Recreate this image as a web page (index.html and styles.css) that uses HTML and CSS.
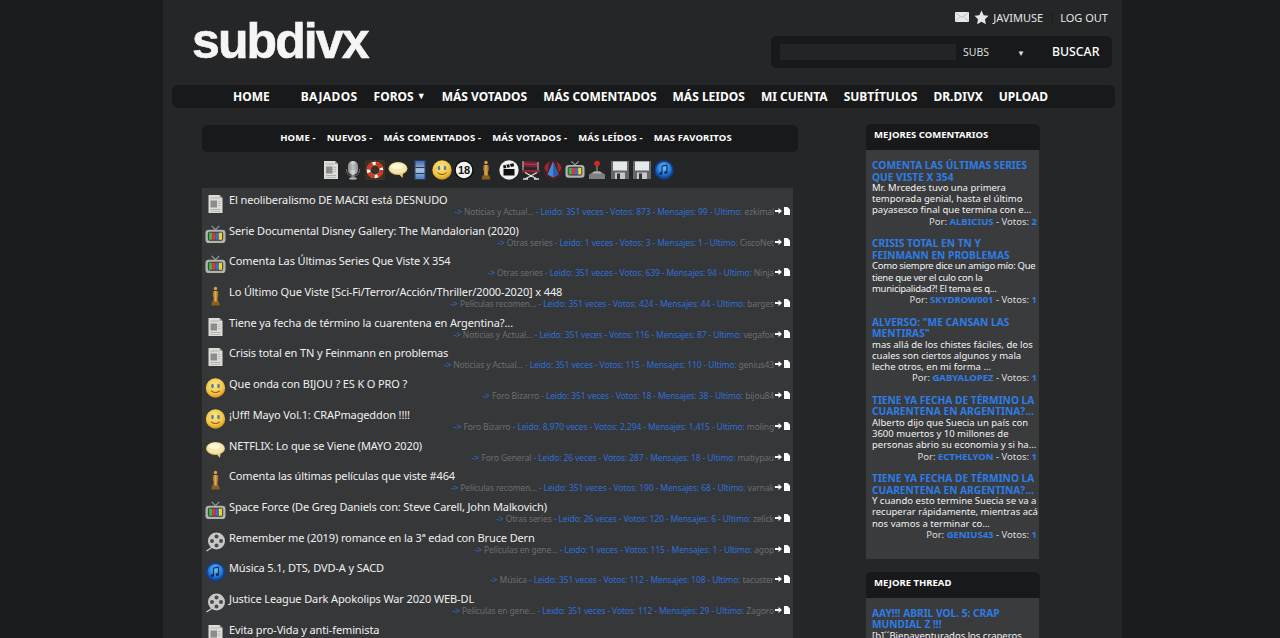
FILE: index.html
```html
<!DOCTYPE html>
<html lang="es">
<head>
  <meta charset="UTF-8">
  <title>subdivx</title>
  <link rel="stylesheet" href="styles.css">
</head>
<body>

  <!-- icon sprites -->
  <svg class="sprites" width="0" height="0">
    <defs>
      <radialGradient id="g-smile" cx=".45" cy=".35" r=".7">
        <stop offset="0" stop-color="#fbe88c"/><stop offset=".65" stop-color="#f3c43f"/><stop offset="1" stop-color="#c98512"/>
      </radialGradient>
      <radialGradient id="g-tunes" cx=".5" cy=".35" r=".7">
        <stop offset="0" stop-color="#6fc6f5"/><stop offset=".6" stop-color="#2379d8"/><stop offset="1" stop-color="#0f3a86"/>
      </radialGradient>
      <linearGradient id="g-mic" x1="0" x2="1" y1="0" y2="0">
        <stop offset="0" stop-color="#8d8d8d"/><stop offset=".5" stop-color="#dadada"/><stop offset="1" stop-color="#8d8d8d"/>
      </linearGradient>
      <linearGradient id="g-gold" x1="0" x2="1" y1="0" y2="0">
        <stop offset="0" stop-color="#8c5c1c"/><stop offset=".5" stop-color="#e0aa4c"/><stop offset="1" stop-color="#8c5c1c"/>
      </linearGradient>
      <linearGradient id="g-film" x1="0" x2="0" y1="0" y2="1">
        <stop offset="0" stop-color="#3f6db4"/><stop offset=".5" stop-color="#a9c4dc"/><stop offset="1" stop-color="#4c7fc6"/>
      </linearGradient>
    </defs>
    <symbol id="i-news" viewBox="0 0 20 20">
      <path d="M3 1h11l3 3v15H3z" fill="#dcdcd8"/><path d="M14 1l3 3h-3z" fill="#9c9c9c"/>
      <path d="M5 3.500h8v1H5zM5 15h10v1H5zM5 17h10v.8H5zM12.500 7h2.500v.8h-2.500zM12.500 9h2.500v.8h-2.500zM12.500 11h2.500v.8h-2.500z" fill="#b0b0ae"/>
      <rect x="5" y="6.500" width="6.500" height="7" fill="#8c8c8a"/>
    </symbol>
    <symbol id="i-mic" viewBox="0 0 20 20">
      <rect x="5" y="1" width="10" height="14" rx="5" fill="url(#g-mic)"/>
      <path d="M6 5h8M6 7h8M6 9h8" stroke="#8a8a8a" stroke-width=".6"/>
      <path d="M3.500 9c0 5.500 3 7 6.500 7s6.500-1.500 6.500-7" fill="none" stroke="#707070" stroke-width="1"/>
      <rect x="8.500" y="15" width="3" height="3" fill="#888"/><ellipse cx="10" cy="18.500" rx="4" ry="1.200" fill="#aaa"/>
    </symbol>
    <symbol id="i-buoy" viewBox="0 0 20 20">
      <rect x="0" y="0" width="20" height="20" rx="2" fill="#3b3226"/>
      <circle cx="10" cy="10" r="6.500" fill="none" stroke="#f3f3f3" stroke-width="3.600"/>
      <circle cx="10" cy="10" r="6.500" fill="none" stroke="#d8331f" stroke-width="3.600" stroke-dasharray="7 3.200"/>
    </symbol>
    <symbol id="i-bubble" viewBox="0 0 20 20">
      <ellipse cx="10" cy="8.500" rx="9.500" ry="6.500" fill="#e4c970"/>
      <ellipse cx="10" cy="8" rx="8.500" ry="5.500" fill="#f6e7ae"/>
      <ellipse cx="9" cy="6.500" rx="6" ry="2.800" fill="#fdf6d8"/>
      <path d="M11 14l3.500 4 .5-5z" fill="#e8d083"/>
    </symbol>
    <symbol id="i-film" viewBox="0 0 20 20">
      <rect x="4" y="0" width="12" height="20" fill="#2a3a5c"/>
      <rect x="5.500" y="1" width="9" height="18" fill="url(#g-film)"/>
      <path d="M5.500 7h9v1h-9zM5.500 13h9v1h-9z" fill="#27365a"/>
    </symbol>
    <symbol id="i-smile" viewBox="0 0 20 20">
      <circle cx="10" cy="10" r="9.700" fill="url(#g-smile)"/>
      <ellipse cx="7" cy="8" rx="1.300" ry="2.200" fill="#5a7ea0"/><ellipse cx="13" cy="8" rx="1.300" ry="2.200" fill="#5a7ea0"/>
      <path d="M5.500 12.500c2 2.600 7 2.600 9 0" fill="none" stroke="#6b4a12" stroke-width="1"/>
    </symbol>
    <symbol id="i-oscar" viewBox="0 0 20 20">
      <circle cx="10" cy="2.500" r="1.700" fill="#d7a24a"/>
      <path d="M7.500 5h5l.5 4-1 3 .3 4H7.700l.3-4-1-3z" fill="url(#g-gold)"/>
      <path d="M6.500 15.500h7l.8 4h-8.600z" fill="#8a5f20"/>
    </symbol>
    <symbol id="i-clap" viewBox="0 0 20 20">
      <circle cx="10" cy="10" r="9.700" fill="#f2f2f2"/>
      <rect x="4.500" y="9" width="11" height="6.500" fill="#111"/>
      <path d="M4 5.500l10.500-2.200.7 3-10.500 2.200z" fill="#111"/>
      <path d="M7 5l1 3M10.500 4.200l1 3" stroke="#eee" stroke-width="1"/>
    </symbol>
    <symbol id="i-chair" viewBox="0 0 20 20">
      <path d="M2 1l15 1v5.500L2 7z" fill="#7c2232"/><path d="M3 4l13 .5" stroke="#a8505e" stroke-width=".8"/>
      <path d="M2 1v9M17 2v8" stroke="#ccc" stroke-width="1"/>
      <path d="M1 10h18v2.500H1z" fill="#8f2738"/>
      <path d="M4 12.500L16 19M16 12.500L4 19M2 19h5M13 19h5" fill="none" stroke="#dcdcdc" stroke-width="1.400"/>
    </symbol>
    <symbol id="i-cone" viewBox="0 0 20 20">
      <circle cx="10" cy="10" r="9.700" fill="#4a2024"/>
      <path d="M10 1.500L15.500 14.500 10 17.500 4.500 14.500z" fill="#4d86d8"/>
      <path d="M10 1.500L15.500 14.500 10 17.500z" fill="#2c5fb0"/>
      <path d="M1.500 8C2 5 4 3 6 2L4.500 13zM18.500 8C18 5 16 3 14 2l1.500 11z" fill="#9c2c2a"/>
    </symbol>
    <symbol id="i-tv" viewBox="0 0 22 20">
      <path d="M7 .5l4 4 4-4" fill="none" stroke="#9a9a9a" stroke-width="1.200"/>
      <rect x="0.500" y="4.500" width="21" height="14" rx="3.500" fill="#b4b4ae"/>
      <rect x="3" y="6.500" width="16" height="9.500" rx="2" fill="#333"/>
      <rect x="4" y="7.500" width="3.500" height="7.500" fill="#3bb54a"/><rect x="7.500" y="7.500" width="3.500" height="7.500" fill="#e5352b"/>
      <rect x="11" y="7.500" width="3.500" height="7.500" fill="#2e6fd8"/><rect x="14.500" y="7.500" width="3.500" height="7.500" fill="#f2d22e"/>
    </symbol>
    <symbol id="i-joy" viewBox="0 0 20 20">
      <path d="M10 5v8" stroke="#777" stroke-width="1.600"/><circle cx="10" cy="3.500" r="2.800" fill="#d22a22"/>
      <path d="M2 14.500l5-3h6l5 3v4.500H2z" fill="#7f7f7f"/><path d="M7 11.500h6l2 2H5z" fill="#b5b5b5"/>
    </symbol>
    <symbol id="i-floppy" viewBox="0 0 20 20">
      <path d="M1 1h18v18H1z" fill="#62676d"/>
      <rect x="3" y="1.500" width="14" height="9" fill="#e6e9ea"/>
      <rect x="5" y="12.500" width="10" height="6.500" fill="#c8c8c8"/><rect x="7" y="13.500" width="3" height="5.500" fill="#333"/>
    </symbol>
    <symbol id="i-tunes" viewBox="0 0 20 20">
      <circle cx="10" cy="10" r="9.700" fill="#123f8a"/><circle cx="10" cy="10" r="8" fill="url(#g-tunes)"/>
      <path d="M8 6.200v7M13 5.200v7M8 6.200l5-1" fill="none" stroke="#0c2c66" stroke-width="1.200"/>
      <circle cx="6.800" cy="13.500" r="1.600" fill="#0c2c66"/><circle cx="11.800" cy="12.500" r="1.600" fill="#0c2c66"/>
    </symbol>
    <symbol id="i-reel" viewBox="0 0 20 20">
      <circle cx="11" cy="9" r="8.500" fill="#c8c8c8"/>
      <circle cx="11" cy="4.500" r="2" fill="#4a4a4c"/><circle cx="11" cy="13.500" r="2" fill="#4a4a4c"/>
      <circle cx="6.500" cy="9" r="2" fill="#4a4a4c"/><circle cx="15.500" cy="9" r="2" fill="#4a4a4c"/>
      <path d="M1 19l6-4" stroke="#ccc" stroke-width="1.400"/>
    </symbol>
    <symbol id="i-goto" viewBox="0 0 15 8">
      <path d="M0 3h3.500V1L7 4 3.500 7V5H0z" fill="#fff"/>
      <path d="M9 0h3.500L15 2.500V8H9z" fill="#fff"/>
    </symbol>
    <symbol id="i-mail" viewBox="0 0 14 10">
      <rect width="14" height="10" fill="#e8e8e8"/><path d="M0 0l7 5.500L14 0M0 10l5-5.500M14 10L9 4.500" fill="none" stroke="#aaa" stroke-width=".7"/>
    </symbol>
    <symbol id="i-star" viewBox="0 0 16 16">
      <path d="M8 .5l2.300 5 5.200.6-3.800 3.700 1 5.400L8 12.600l-4.700 2.600 1-5.400L.5 6.100l5.200-.6z" fill="#e6e6e6"/>
    </symbol>
  </svg>

  <div class="page">

    <header class="top">
      <a class="logo">subdivx</a>
      <div class="top-right">
        <div class="user-line">
          <svg class="mail"><use href="#i-mail"/></svg>
          <svg class="star"><use href="#i-star"/></svg>
          <span>JAVIMUSE</span>
          <span class="sep"></span>
          <span>LOG OUT</span>
        </div>
        <form class="search">
          <span class="search-input"></span>
          <span class="search-type">SUBS</span>
          <span class="search-arrow">▼</span>
          <span class="search-btn">BUSCAR</span>
        </form>
      </div>
    </header>

    <nav class="main-nav">
      <a>HOME</a>
      <a class="wide">BAJADOS</a>
      <a>FOROS <small>▼</small></a>
      <a>MÁS VOTADOS</a>
      <a>MÁS COMENTADOS</a>
      <a>MÁS LEIDOS</a>
      <a>MI CUENTA</a>
      <a>SUBTÍTULOS</a>
      <a>DR.DIVX</a>
      <a>UPLOAD</a>
    </nav>

    <div class="columns">
      <main class="left">
        <div class="sub-nav">
          <a>HOME -</a>
          <a>NUEVOS -</a>
          <a>MÁS COMENTADOS -</a>
          <a>MÁS VOTADOS -</a>
          <a>MÁS LEÍDOS -</a>
          <a>MAS FAVORITOS</a>
        </div>

        <div class="cats">
          <svg><use href="#i-news"/></svg>
          <svg><use href="#i-mic"/></svg>
          <svg><use href="#i-buoy"/></svg>
          <svg><use href="#i-bubble"/></svg>
          <svg><use href="#i-film"/></svg>
          <svg><use href="#i-smile"/></svg>
          <svg viewBox="0 0 20 20">
            <circle cx="10" cy="10" r="9.700" fill="#111"/><circle cx="10" cy="10" r="8.200" fill="#f4f4f4"/>
            <text x="10" y="14" class="badge-text" text-anchor="middle">18</text>
          </svg>
          <svg><use href="#i-oscar"/></svg>
          <svg><use href="#i-clap"/></svg>
          <svg><use href="#i-chair"/></svg>
          <svg><use href="#i-cone"/></svg>
          <svg><use href="#i-tv"/></svg>
          <svg><use href="#i-joy"/></svg>
          <svg><use href="#i-floppy"/></svg>
          <svg><use href="#i-floppy"/></svg>
          <svg><use href="#i-tunes"/></svg>
        </div>

        <div class="threads">
          <div class="thread">
            <svg class="thread-icon"><use href="#i-news"/></svg>
            <div class="thread-body">
              <div class="thread-title">El neoliberalismo DE MACRI está DESNUDO</div>
              <div class="thread-meta"><em>-&gt;</em> <i>Noticias y Actual...</i> - Leido: 351 veces - Votos: 873 - Mensajes: 99 - Ultimo: <i>ezkimal</i><svg class="goto"><use href="#i-goto"/></svg></div>
            </div>
          </div>
          <div class="thread">
            <svg class="thread-icon"><use href="#i-tv"/></svg>
            <div class="thread-body">
              <div class="thread-title">Serie Documental Disney Gallery: The Mandalorian (2020)</div>
              <div class="thread-meta"><em>-&gt;</em> <i>Otras series</i> - Leido: 1 veces - Votos: 3 - Mensajes: 1 - Ultimo: <i>CiscoNet</i><svg class="goto"><use href="#i-goto"/></svg></div>
            </div>
          </div>
          <div class="thread">
            <svg class="thread-icon"><use href="#i-tv"/></svg>
            <div class="thread-body">
              <div class="thread-title">Comenta Las Últimas Series Que Viste X 354</div>
              <div class="thread-meta"><em>-&gt;</em> <i>Otras series</i> - Leido: 351 veces - Votos: 639 - Mensajes: 94 - Ultimo: <i>Ninja</i><svg class="goto"><use href="#i-goto"/></svg></div>
            </div>
          </div>
          <div class="thread">
            <svg class="thread-icon"><use href="#i-oscar"/></svg>
            <div class="thread-body">
              <div class="thread-title">Lo Último Que Viste [Sci-Fi/Terror/Acción/Thriller/2000-2020] x 448</div>
              <div class="thread-meta"><em>-&gt;</em> <i>Películas recomen...</i> - Leido: 351 veces - Votos: 424 - Mensajes: 44 - Ultimo: <i>barges</i><svg class="goto"><use href="#i-goto"/></svg></div>
            </div>
          </div>
          <div class="thread">
            <svg class="thread-icon"><use href="#i-news"/></svg>
            <div class="thread-body">
              <div class="thread-title">Tiene ya fecha de término la cuarentena en Argentina?...</div>
              <div class="thread-meta"><em>-&gt;</em> <i>Noticias y Actual...</i> - Leido: 351 veces - Votos: 116 - Mensajes: 87 - Ultimo: <i>vegafox</i><svg class="goto"><use href="#i-goto"/></svg></div>
            </div>
          </div>
          <div class="thread">
            <svg class="thread-icon"><use href="#i-news"/></svg>
            <div class="thread-body">
              <div class="thread-title">Crisis total en TN y Feinmann en problemas</div>
              <div class="thread-meta"><em>-&gt;</em> <i>Noticias y Actual...</i> - Leido: 351 veces - Votos: 115 - Mensajes: 110 - Ultimo: <i>genius43</i><svg class="goto"><use href="#i-goto"/></svg></div>
            </div>
          </div>
          <div class="thread">
            <svg class="thread-icon"><use href="#i-smile"/></svg>
            <div class="thread-body">
              <div class="thread-title">Que onda con BIJOU ? ES K O PRO ?</div>
              <div class="thread-meta"><em>-&gt;</em> <i>Foro Bizarro</i> - Leido: 351 veces - Votos: 18 - Mensajes: 38 - Ultimo: <i>bijou84</i><svg class="goto"><use href="#i-goto"/></svg></div>
            </div>
          </div>
          <div class="thread">
            <svg class="thread-icon"><use href="#i-smile"/></svg>
            <div class="thread-body">
              <div class="thread-title">¡Uff! Mayo Vol.1: CRAPmageddon !!!!</div>
              <div class="thread-meta"><em>-&gt;</em> <i>Foro Bizarro</i> - Leido: 8,970 veces - Votos: 2,294 - Mensajes: 1,415 - Ultimo: <i>moling</i><svg class="goto"><use href="#i-goto"/></svg></div>
            </div>
          </div>
          <div class="thread">
            <svg class="thread-icon"><use href="#i-bubble"/></svg>
            <div class="thread-body">
              <div class="thread-title">NETFLIX: Lo que se Viene (MAYO 2020)</div>
              <div class="thread-meta"><em>-&gt;</em> <i>Foro General</i> - Leido: 26 veces - Votos: 287 - Mensajes: 18 - Ultimo: <i>matiypau</i><svg class="goto"><use href="#i-goto"/></svg></div>
            </div>
          </div>
          <div class="thread">
            <svg class="thread-icon"><use href="#i-oscar"/></svg>
            <div class="thread-body">
              <div class="thread-title">Comenta las últimas películas que viste #464</div>
              <div class="thread-meta"><em>-&gt;</em> <i>Películas recomen...</i> - Leido: 351 veces - Votos: 190 - Mensajes: 68 - Ultimo: <i>varnak</i><svg class="goto"><use href="#i-goto"/></svg></div>
            </div>
          </div>
          <div class="thread">
            <svg class="thread-icon"><use href="#i-tv"/></svg>
            <div class="thread-body">
              <div class="thread-title">Space Force (De Greg Daniels con: Steve Carell, John Malkovich)</div>
              <div class="thread-meta"><em>-&gt;</em> <i>Otras series</i> - Leido: 26 veces - Votos: 120 - Mensajes: 6 - Ultimo: <i>zelick</i><svg class="goto"><use href="#i-goto"/></svg></div>
            </div>
          </div>
          <div class="thread">
            <svg class="thread-icon"><use href="#i-reel"/></svg>
            <div class="thread-body">
              <div class="thread-title">Remember me (2019) romance en la 3ª edad con Bruce Dern</div>
              <div class="thread-meta"><em>-&gt;</em> <i>Películas en gene...</i> - Leido: 1 veces - Votos: 115 - Mensajes: 1 - Ultimo: <i>agop</i><svg class="goto"><use href="#i-goto"/></svg></div>
            </div>
          </div>
          <div class="thread">
            <svg class="thread-icon"><use href="#i-tunes"/></svg>
            <div class="thread-body">
              <div class="thread-title">Música 5.1, DTS, DVD-A y SACD</div>
              <div class="thread-meta"><em>-&gt;</em> <i>Música</i> - Leido: 351 veces - Votos: 112 - Mensajes: 108 - Ultimo: <i>tacuster</i><svg class="goto"><use href="#i-goto"/></svg></div>
            </div>
          </div>
          <div class="thread">
            <svg class="thread-icon"><use href="#i-reel"/></svg>
            <div class="thread-body">
              <div class="thread-title">Justice League Dark Apokolips War 2020 WEB-DL</div>
              <div class="thread-meta"><em>-&gt;</em> <i>Películas en gene...</i> - Leido: 351 veces - Votos: 112 - Mensajes: 29 - Ultimo: <i>Zagoro</i><svg class="goto"><use href="#i-goto"/></svg></div>
            </div>
          </div>
          <div class="thread">
            <svg class="thread-icon"><use href="#i-news"/></svg>
            <div class="thread-body">
              <div class="thread-title">Evita pro-Vida y anti-feminista</div>
            </div>
          </div>
        </div>
      </main>

      <aside class="right">
        <h3 class="box-head">MEJORES COMENTARIOS</h3>
        <div class="box-body">
          <div class="comment">
            <a class="comment-title">COMENTA LAS ÚLTIMAS SERIES QUE VISTE X 354</a>
            <p>Mr. Mrcedes tuvo una primera temporada genial, hasta el último payasesco final que termina con e...</p>
            <div class="comment-by">Por: <b>ALBICIUS</b> - Votos: <b>2</b></div>
          </div>
          <div class="comment">
            <a class="comment-title">CRISIS TOTAL EN TN Y<br>FEINMANN EN PROBLEMAS</a>
            <p class="tight">Como siempre dice un amigo mío: Que tiene que ver el culo con la municipalidad?! El tema es q...</p>
            <div class="comment-by">Por: <b>SKYDROW001</b> - Votos: <b>1</b></div>
          </div>
          <div class="comment">
            <a class="comment-title">ALVERSO: "ME CANSAN LAS MENTIRAS"</a>
            <p>mas allá de los chistes fáciles, de los cuales son ciertos algunos y mala leche otros, en mi forma ...</p>
            <div class="comment-by">Por: <b>GABYALOPEZ</b> - Votos: <b>1</b></div>
          </div>
          <div class="comment">
            <a class="comment-title">TIENE YA FECHA DE TÉRMINO LA CUARENTENA EN ARGENTINA?...</a>
            <p>Alberto dijo que Suecia un país con 3600 muertos y 10 millones de personas abrio su economia y si ha...</p>
            <div class="comment-by">Por: <b>ECTHELYON</b> - Votos: <b>1</b></div>
          </div>
          <div class="comment">
            <a class="comment-title">TIENE YA FECHA DE TÉRMINO LA CUARENTENA EN ARGENTINA?...</a>
            <p>Y cuando esto termine Suecia se va a recuperar rápidamente, mientras acá nos vamos a terminar co...</p>
            <div class="comment-by">Por: <b>GENIUS43</b> - Votos: <b>1</b></div>
          </div>
        </div>

        <h3 class="box-head second">MEJORE THREAD</h3>
        <div class="box-body">
          <div class="comment">
            <a class="comment-title">AAY!!! ABRIL VOL. 5: CRAP MUNDIAL Z !!!</a>
            <p>[b]´´Bienaventurados los craperos</p>
          </div>
        </div>
      </aside>
    </div>
  </div>

</body>
</html>
```

FILE: styles.css
```css
html, body {
  margin: 0;
  height: 638px;
  overflow: hidden;
}
body {
  background-color: #1b1c1e;
  font-family: "Noto Sans", "Open Sans", sans-serif;
  color: #fff;
}
.sprites {
  display: block;
  height: 0;
}
.page {
  width: 959px;
  height: 638px;
  margin-left: 163px;
  background-color: #252628;
  overflow: hidden;
}

/* header */
.top {
  display: flex;
  justify-content: space-between;
  height: 85px;
}
.logo {
  font-family: "Liberation Sans", Arial, sans-serif;
  font-size: 50px;
  font-weight: bold;
  letter-spacing: -1.9px;
  line-height: 58px;
  margin: 12px 0 0 29px;
  color: #f5f5f5;
  -webkit-text-stroke: 0.6px #f5f5f5;
}
.top-right {
  width: 341px;
  margin-right: 10px;
}
.user-line {
  display: flex;
  align-items: center;
  justify-content: flex-end;
  height: 36px;
  padding-right: 4px;
  padding-bottom: 2px;
  box-sizing: border-box;
  font-size: 11px;
  color: #e6e6e6;
}
.mail {
  width: 14px;
  height: 10px;
  margin-right: 5px;
}
.star {
  width: 15px;
  height: 15px;
  margin-right: 4px;
}
.sep {
  width: 1px;
  height: 11px;
  margin: 0 7px 0 9px;
  background-color: #1a1a1a;
}
.search {
  display: flex;
  align-items: center;
  height: 32px;
  margin: 0;
  background-color: #18191a;
  border-radius: 5px;
  font-size: 10.5px;
}
.search-input {
  width: 176px;
  height: 16px;
  margin-left: 9px;
  background-color: #232426;
}
.search-type {
  width: 54px;
  margin-left: 7px;
  color: #ddd;
}
.search-arrow {
  font-size: 8px;
  color: #ddd;
}
.search-btn {
  margin-left: 27px;
  padding-bottom: 2px;
  font-size: 12.3px;
  font-weight: 500;
}

/* main nav */
.main-nav {
  display: flex;
  align-items: center;
  gap: 16px;
  width: 943px;
  height: 23px;
  margin-left: 9px;
  padding-left: 61px;
  box-sizing: border-box;
  background-color: #18191a;
  border-radius: 6px;
  font-size: 12px;
  font-weight: 700;
  white-space: nowrap;
}
.main-nav .wide {
  margin-left: 15px;
  letter-spacing: 0.4px;
}
.main-nav small {
  font-size: 9px;
  vertical-align: 2px;
}

/* columns */
.columns {
  display: flex;
  align-items: flex-start;
  margin: 17px 0 0 39px;
}
.left {
  width: 596px;
}
.right {
  width: 174px;
  margin-top: -1px;
  margin-left: 68px;
}

.sub-nav {
  display: flex;
  align-items: center;
  justify-content: center;
  gap: 11px;
  height: 27px;
  padding-left: 12px;
  padding-bottom: 2px;
  box-sizing: border-box;
  background-color: #18191a;
  border-radius: 5px;
  font-size: 9.5px;
  font-weight: 700;
  letter-spacing: 0.15px;
  white-space: nowrap;
}

.cats {
  display: flex;
  justify-content: center;
  align-items: center;
  gap: 2.2px;
  width: 591px;
  height: 36px;
}
.cats svg {
  width: 20px;
  height: 20px;
}

.threads {
  width: 591px;
  background-color: #363739;
}
.thread {
  display: flex;
  height: 30.7px;
}
.thread-icon {
  flex: none;
  width: 21px;
  height: 20px;
  margin: 6px 3px 0 3px;
}
.thread-body {
  flex: 1;
  min-width: 0;
  padding-right: 3px;
}
.thread-title {
  font-size: 11px;
  letter-spacing: -0.12px;
  line-height: 15px;
  padding-top: 4px;
  color: #f0f0f0;
  white-space: nowrap;
}
.thread-meta {
  margin-top: -1px;
  font-size: 8.5px;
  letter-spacing: -0.13px;
  line-height: 12px;
  text-align: right;
  color: #2f6fd8;
  white-space: nowrap;
}
.thread-meta em {
  font-style: normal;
}
.thread-meta i {
  font-style: normal;
  color: #6d6e70;
}
.goto {
  width: 15px;
  height: 8px;
  margin-left: 1px;
}
.badge-text {
  font-family: "Liberation Sans", sans-serif;
  font-size: 11px;
  font-weight: bold;
  fill: #111;
}

/* sidebar */
.box-head {
  margin: 0;
  height: 26px;
  padding-left: 8px;
  background-color: #18191a;
  border-radius: 5px 5px 0 0;
  font-size: 9.5px;
  font-weight: 700;
  line-height: 22px;
}
.box-head.second {
  margin-top: 13px;
}
.box-body {
  width: 173px;
  padding: 10px 0 18.5px 6px;
  box-sizing: border-box;
  background-color: #3a3b3d;
}
.box-head.second + .box-body {
  height: 60px;
}
.comment {
  margin-bottom: 11.5px;
  font-size: 9.5px;
  line-height: 11.2px;
}
.comment:last-child {
  margin-bottom: 0;
}
.comment-title {
  display: block;
  font-size: 10.2px;
  font-weight: 700;
  line-height: 11.5px;
  color: #2e7de6;
}
.comment p {
  margin: -1px 0 0;
  color: #f2f2f2;
}
.comment p.tight {
  letter-spacing: -0.3px;
}
.comment-by {
  padding-right: 2px;
  text-align: right;
  color: #ddd;
}
.comment-by b {
  color: #2e7de6;
}
```
